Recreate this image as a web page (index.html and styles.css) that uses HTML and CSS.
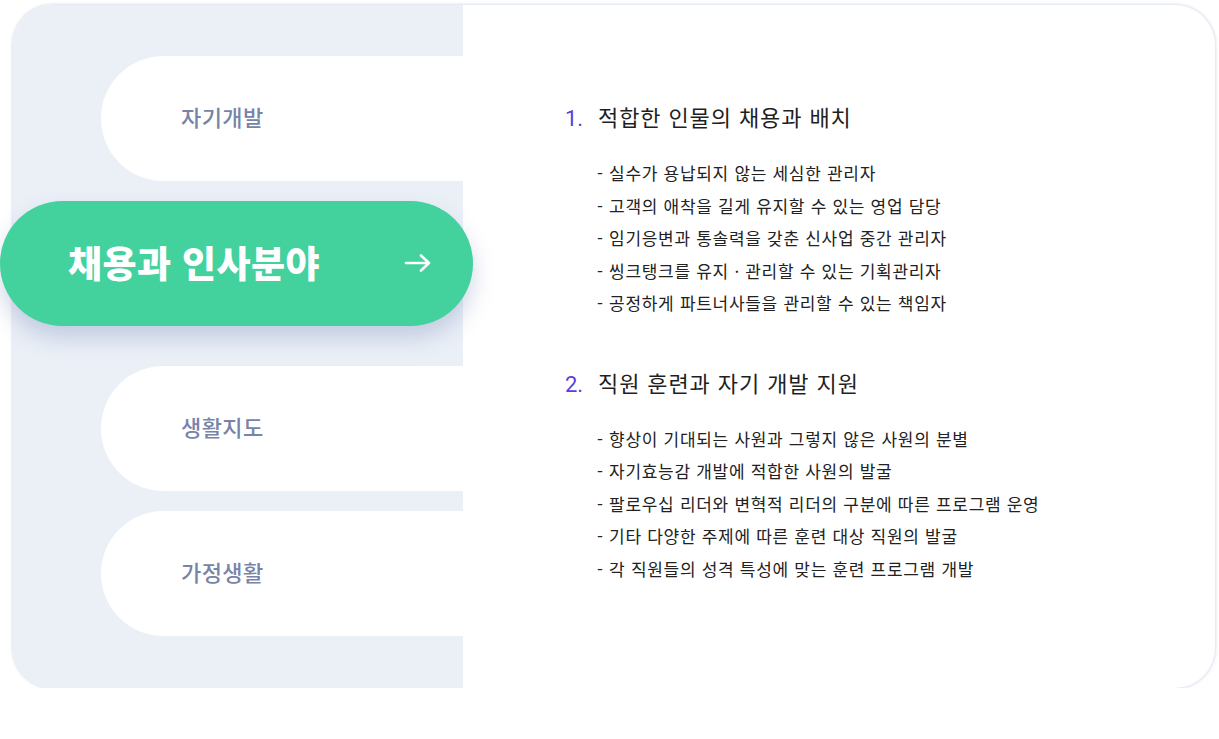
FILE: index.html
```html
<!DOCTYPE html>
<html lang="ko">
<head>
<meta charset="utf-8">
<link rel="stylesheet" href="styles.css">
</head>
<body>
<div class="card">
  <div class="tabs">
    <div class="tab">자기개발</div>
    <div class="tab tab-active">
      <span class="tab-label">채용과 인사분야</span>
      <svg class="arrow" width="30" height="20" viewBox="0 0 30 20"><path d="M3 10 H26 M18 2.5 L26 10 L18 17.5" fill="none" stroke="#fff" stroke-width="2.6" stroke-linecap="round" stroke-linejoin="round"/></svg>
    </div>
    <div class="tab tab-gap">생활지도</div>
    <div class="tab">가정생활</div>
  </div>
  <div class="content">
    <div class="section">
      <h3 class="heading"><span class="num">1.</span>적합한 인물의 채용과 배치</h3>
      <ul class="items">
        <li>- 실수가 용납되지 않는 세심한 관리자</li>
        <li>- 고객의 애착을 길게 유지할 수 있는 영업 담당</li>
        <li>- 임기응변과 통솔력을 갖춘 신사업 중간 관리자</li>
        <li>- 씽크탱크를 유지 · 관리할 수 있는 기획관리자</li>
        <li>- 공정하게 파트너사들을 관리할 수 있는 책임자</li>
      </ul>
    </div>
    <div class="section section-2">
      <h3 class="heading"><span class="num">2.</span>직원 훈련과 자기 개발 지원</h3>
      <ul class="items">
        <li>- 향상이 기대되는 사원과 그렇지 않은 사원의 분별</li>
        <li>- 자기효능감 개발에 적합한 사원의 발굴</li>
        <li>- 팔로우십 리더와 변혁적 리더의 구분에 따른 프로그램 운영</li>
        <li>- 기타 다양한 주제에 따른 훈련 대상 직원의 발굴</li>
        <li>- 각 직원들의 성격 특성에 맞는 훈련 프로그램 개발</li>
      </ul>
    </div>
  </div>
</div>
</body>
</html>
```
FILE: styles.css
```css
* { box-sizing: border-box; }
html, body { margin: 0; padding: 0; background: #fff; }
body {
  font-family: "Noto Sans CJK KR", "Noto Sans", sans-serif;
  overflow: hidden;
}
.card {
  margin: 5px 0 0 13px;
  width: 1202px;
  height: 683px;
  display: flex;
  border-radius: 40px;
  box-shadow: 0 0 3px 1px rgba(205, 214, 228, 0.75);
  background: #fff;
}
.tabs {
  width: 450px;
  flex: none;
  background: #ebf0f7;
  border-radius: 40px 0 0 40px;
  padding-top: 51px;
  display: flex;
  flex-direction: column;
}
.tab {
  height: 125px;
  margin-left: 88px;
  background: #fff;
  border-radius: 62.5px 0 0 62.5px;
  display: flex;
  align-items: center;
  padding-left: 80px;
  padding-bottom: 5px;
  font-size: 22px;
  letter-spacing: 0.4px;
  color: #7784a8;
  font-weight: 500;
}
.tab-active {
  margin-left: -13px;
  width: 473px;
  margin-top: 20px;
  background: #43d19e;
  border-radius: 62.5px;
  padding-left: 68px;
  padding-right: 40px;
  padding-bottom: 2px;
  justify-content: space-between;
  color: #fff;
  box-shadow: 0 12px 22px rgba(90, 110, 170, 0.28);
  position: relative;
  z-index: 1;
}
.tab-label {
  font-size: 37px;
  font-weight: 900;
  letter-spacing: 0.4px;
  line-height: 1;
}
.arrow { display: block; }
.tab-gap { margin-top: 40px; }
.tab-gap + .tab { margin-top: 20px; }
.content {
  flex: 1;
  padding: 98px 0 0 102px;
  border-radius: 0 40px 40px 0;
}
.heading {
  margin: 0;
  display: flex;
  align-items: baseline;
  height: 30px;
  padding-top: 1px;
  line-height: 24px;
  font-size: 22px;
  font-weight: 400;
  color: #1f1f1f;
  letter-spacing: 0.9px;
}
.num {
  width: 33px;
  color: #5b3fdc;
  font-weight: 400;
  font-family: "Roboto", "Noto Sans CJK KR", sans-serif;
  font-size: 22px;
  letter-spacing: 0;
}
.items {
  list-style: none;
  margin: 24px 0 0 32px;
  padding: 0;
}
.items li {
  height: 32.5px;
  line-height: 32.5px;
  font-size: 17px;
  color: #222;
  letter-spacing: 0.7px;
}
.section-2 { margin-top: 49px; }
```
